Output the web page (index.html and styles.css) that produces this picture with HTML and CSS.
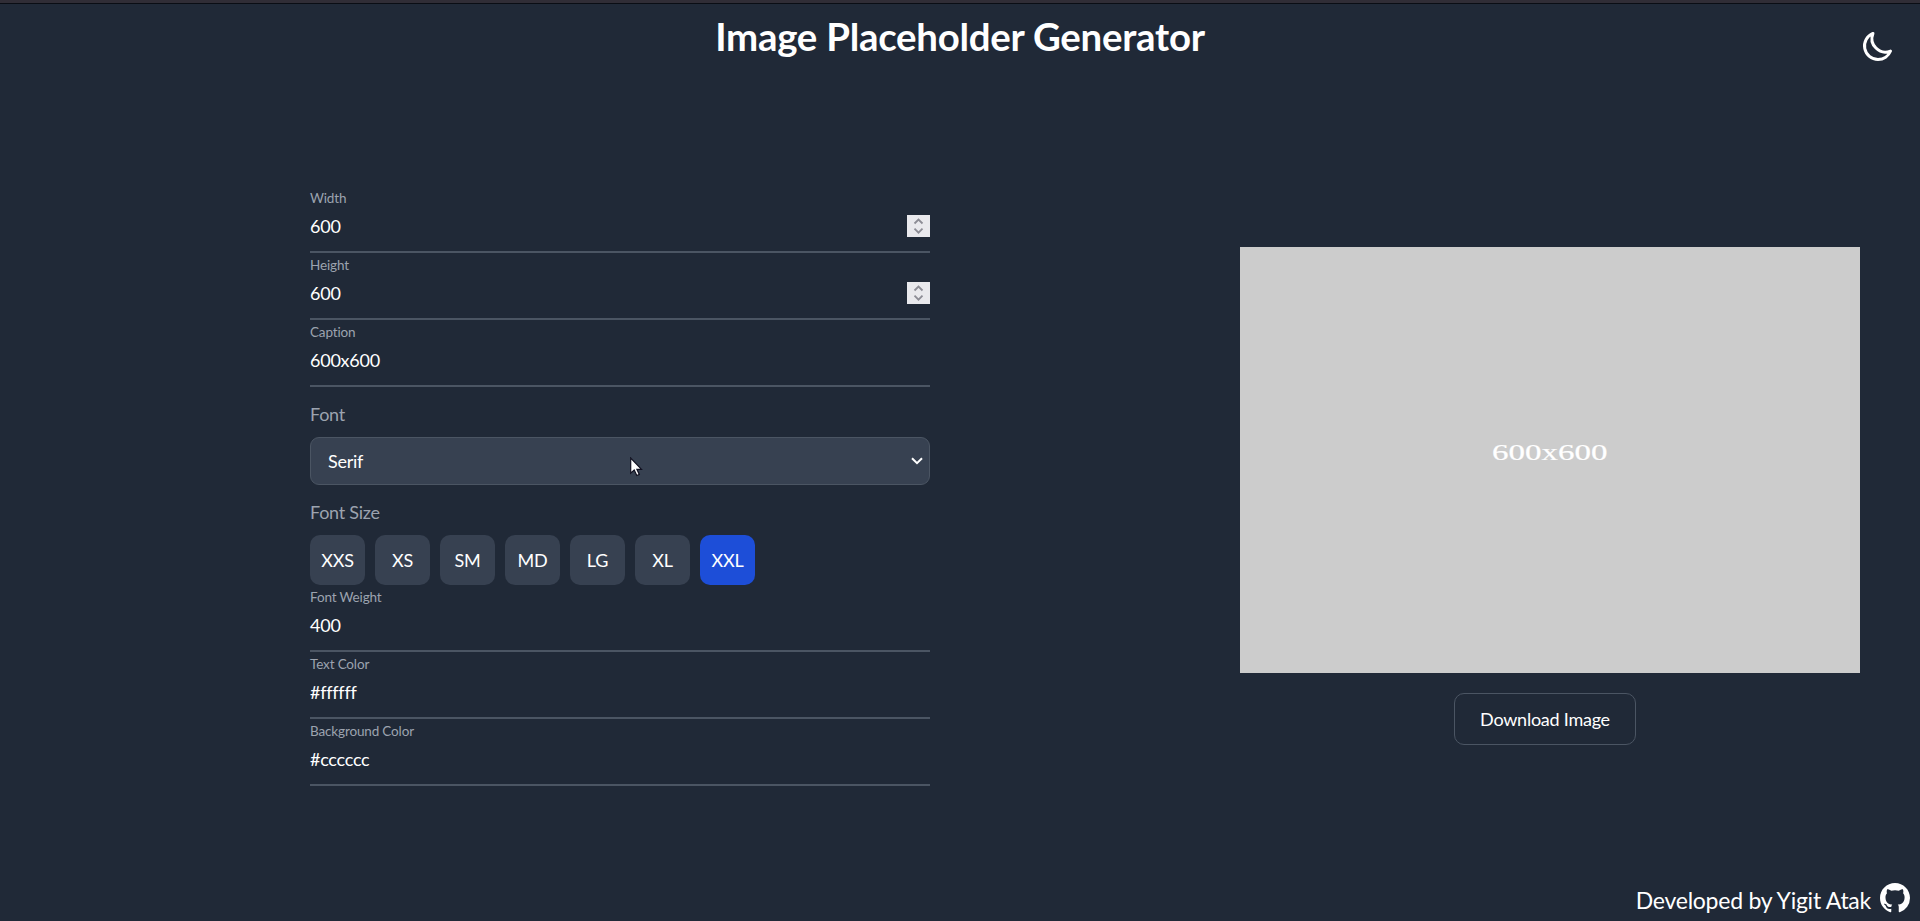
FILE: index.html
```html
<!DOCTYPE html>
<html lang="en">
<head>
<meta charset="utf-8">
<title>Image Placeholder Generator</title>
<link rel="stylesheet" href="styles.css">
</head>
<body>
<header class="header">
  <h1 class="title">Image Placeholder Generator</h1>
  <button class="theme" aria-label="Toggle theme">
    <svg width="36" height="36" viewBox="0 0 24 24" fill="none" stroke="currentColor" stroke-width="2" stroke-linecap="round" stroke-linejoin="round"><path d="M20.354 15.354A9 9 0 018.646 3.646 9.003 9.003 0 0012 21a9.003 9.003 0 008.354-5.646z"/></svg>
  </button>
</header>
<main class="main">
  <section class="form">
    <div class="field"><span class="label">Width</span><div class="value">600<span class="spinner"><svg width="23" height="22" viewBox="0 0 23 22" fill="none" stroke="#8c8c95" stroke-width="1.8"><path d="M7.5 8.5l4-4 4 4M7.5 13.7l4 4 4-4"/></svg></span></div></div>
    <div class="field"><span class="label">Height</span><div class="value">600<span class="spinner"><svg width="23" height="22" viewBox="0 0 23 22" fill="none" stroke="#8c8c95" stroke-width="1.8"><path d="M7.5 8.5l4-4 4 4M7.5 13.7l4 4 4-4"/></svg></span></div></div>
    <div class="field"><span class="label">Caption</span><div class="value">600x600</div></div>
    <div class="group-label font-label">Font</div>
    <div class="select"><span>Serif</span><svg width="12" height="8" viewBox="0 0 12 8" fill="none" stroke="#fff" stroke-width="2"><path d="M1 1.2l5 5 5-5"/></svg></div>
    <div class="group-label size-label">Font Size</div>
    <div class="sizes">
      <button class="size">XXS</button><button class="size">XS</button><button class="size">SM</button><button class="size">MD</button><button class="size">LG</button><button class="size">XL</button><button class="size active">XXL</button>
    </div>
    <div class="field"><span class="label">Font Weight</span><div class="value">400</div></div>
    <div class="field"><span class="label">Text Color</span><div class="value">#ffffff</div></div>
    <div class="field"><span class="label">Background Color</span><div class="value">#cccccc</div></div>
  </section>
  <section class="preview">
    <div class="image"><span class="caption">600x600</span></div>
    <button class="download">Download Image</button>
  </section>
</main>
<footer class="footer">
  <span class="credit">Developed by Yigit Atak</span>
  <svg width="30" height="30" viewBox="0 0 16 16" fill="currentColor"><path d="M8 0C3.58 0 0 3.58 0 8c0 3.54 2.29 6.53 5.47 7.59.4.07.55-.17.55-.38 0-.19-.01-.82-.01-1.49-2.01.37-2.53-.49-2.69-.94-.09-.23-.48-.94-.82-1.13-.28-.15-.68-.52-.01-.53.63-.01 1.08.58 1.23.82.72 1.21 1.87.87 2.33.66.07-.52.28-.87.51-1.07-1.78-.2-3.64-.89-3.64-3.95 0-.87.31-1.59.82-2.15-.08-.2-.36-1.02.08-2.12 0 0 .67-.21 2.2.82.64-.18 1.32-.27 2-.27s1.36.09 2 .27c1.53-1.04 2.2-.82 2.2-.82.44 1.1.16 1.92.08 2.12.51.56.82 1.27.82 2.15 0 3.07-1.87 3.75-3.65 3.95.29.25.54.73.54 1.48 0 1.07-.01 1.93-.01 2.2 0 .21.15.46.55.38A8.01 8.01 0 0016 8c0-4.42-3.58-8-8-8z"/></svg>
</footer>
<svg class="cursor" width="14" height="21" viewBox="0 0 14 21"><path d="M.7 1v15.2l3.5-3.2 2.6 5.5 2.5-1.1-2.4-5.1h4.6z" fill="#fff" stroke="#101020" stroke-width="1.2"/></svg>
</body>
</html>
```
FILE: styles.css
```css
* { box-sizing: border-box; }
body {
  margin: 0;
  height: 921px;
  overflow: hidden;
  display: flex;
  flex-direction: column;
  background: #202937;
  border-top: 3px solid #302d36;
  color: #fff;
  font: 18px/27px Lato, sans-serif;
  letter-spacing: -0.25px;
}
button { font: inherit; letter-spacing: inherit; color: inherit; border: 0; padding: 0; }
.header {
  position: relative;
  height: 183px;
  flex: none;
  border-top: 1px solid #0a0d14;
  text-align: center;
}
.title { margin: 10px 0 0; font-size: 38.4px; line-height: 45px; font-weight: 700; }
.theme { position: absolute; top: 24px; right: 24px; width: 36px; height: 36px; background: none; }
.theme svg { display: block; }
.main { display: flex; flex: none; padding-left: 310px; }
.form { width: 620px; }
.field { height: 67px; border-bottom: 2px solid #4b5563; padding-top: 2px; }
.label { display: block; font-size: 13.5px; line-height: 20px; letter-spacing: -0.15px; color: #9ca3af; }
.value { display: flex; justify-content: space-between; align-items: center; height: 27px; margin-top: 5px; }
.spinner { width: 23px; height: 22px; margin-bottom: 1px; background: #e9e9ed; }
.spinner svg { display: block; }
.group-label { color: #9ca3af; }
.font-label { margin: 14px 0 9px; }
.select {
  height: 48px;
  display: flex;
  justify-content: space-between;
  align-items: center;
  padding: 0 6px 0 17px;
  background: #374151;
  border: 1px solid #4b5563;
  border-radius: 9px;
}
.size-label { margin: 14px 0 9px; }
.sizes { display: flex; gap: 10px; }
.size { width: 55px; height: 50px; border-radius: 10px; background: #374151; }
.size.active { background: #1d4ed8; }
.preview { width: 620px; margin: 61px 0 0 310px; }
.image { height: 426px; background: #ccc; display: flex; align-items: center; justify-content: center; }
.caption {
  margin-top: -14px;
  font: 22.7px/28px "Liberation Serif", serif;
  letter-spacing: 0;
  -webkit-text-stroke: 0.2px #fff;
  transform: scaleX(1.452);
}
.download {
  display: block;
  width: 182px;
  height: 52px;
  margin: 20px 0 0 214px;
  background: none;
  border: 1px solid #4b5563;
  border-radius: 10px;
}
.footer {
  display: flex;
  justify-content: flex-end;
  align-items: center;
  gap: 9px;
  margin-top: auto;
  padding: 0 10px 3px 0;
  font-size: 23px;
  line-height: 36px;
}
.credit { padding-top: 5px; }
.cursor { position: absolute; left: 630px; top: 457px; }
```
